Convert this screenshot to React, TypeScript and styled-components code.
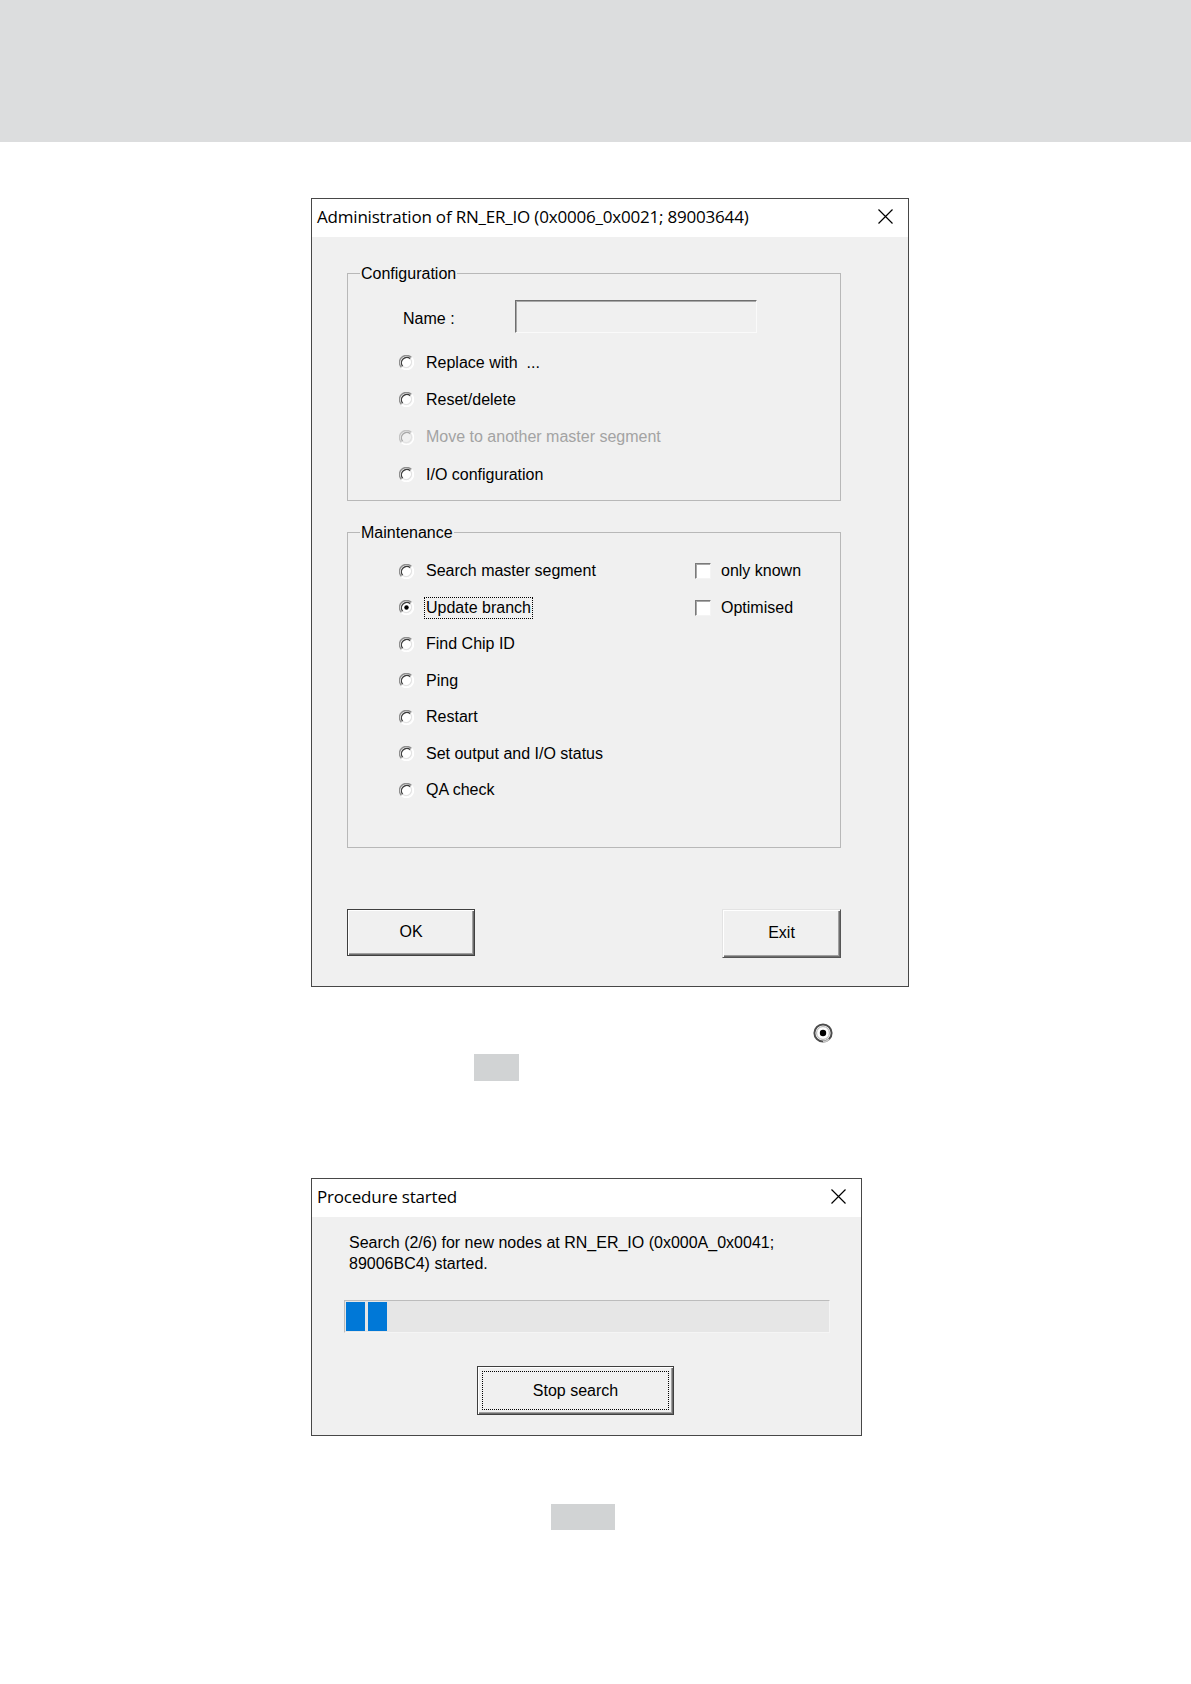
import React from 'react';
import styled, { createGlobalStyle } from 'styled-components';

const GlobalStyle = createGlobalStyle`
  body {
    margin: 0;
    background: #fff;
    font-family: 'Liberation Sans', Arial, sans-serif;
    color: #000;
  }
`;

const Page = styled.div`
  width: 1191px;
  min-height: 1684px;
  display: flex;
  flex-direction: column;
  align-items: flex-start;
`;

const Band = styled.div`
  align-self: stretch;
  height: 142px;
  background: #dcddde;
  flex-shrink: 0;
`;

const Window = styled.div<{ $top: number; $width: number; $height: number }>`
  box-sizing: border-box;
  margin: ${(p) => p.$top}px 0 0 311px;
  width: ${(p) => p.$width}px;
  height: ${(p) => p.$height}px;
  border: 1px solid #474747;
  background: #f0f0f0;
  display: flex;
  flex-direction: column;
  flex-shrink: 0;
`;

const TitleBar = styled.div`
  box-sizing: border-box;
  height: 38px;
  flex-shrink: 0;
  background: #fff;
  display: flex;
  align-items: center;
  justify-content: space-between;
  padding: 0 15px 3px 5px;
`;

const Title = styled.span`
  font-family: 'Open Sans', 'Noto Sans', sans-serif;
  font-size: 17px;
  letter-spacing: -0.2px;
  color: #000;
`;

const AdminBody = styled.div`
  display: flex;
  flex-direction: column;
  padding: 26px 67px 0 35px;
`;

const GroupBox = styled.fieldset<{ $gap?: number }>`
  margin: ${(p) => p.$gap || 0}px 0 0;
  padding: 0;
  min-width: 0;
  border: 1px solid #b8b8b8;
`;

const Legend = styled.legend`
  margin-left: 12px;
  padding: 2px 1px 0;
  font-size: 16px;
  line-height: 18px;
`;

const GroupContent = styled.div<{ $pt: number; $pb: number }>`
  display: flex;
  flex-direction: column;
  padding: ${(p) => p.$pt}px 0 ${(p) => p.$pb}px 51px;
`;

const NameRow = styled.div`
  height: 36px;
  margin: 0 0 10px 4px;
  display: flex;
  align-items: center;
`;

const NameLabel = styled.span`
  width: 112px;
  margin-top: 5px;
  font-size: 16px;
`;

const TextBox = styled.div`
  box-sizing: border-box;
  width: 242px;
  height: 33px;
  background: #f0f0f0;
  border-style: solid;
  border-width: 1px;
  border-color: #6e6e6e #fafafa #fafafa #6e6e6e;
  box-shadow: inset 1px 1px 0 #a8a8a8;
`;

const Columns = styled.div`
  display: flex;
`;

const Column = styled.div<{ $width?: number }>`
  display: flex;
  flex-direction: column;
  width: ${(p) => (p.$width ? `${p.$width}px` : 'auto')};
`;

const OptionRow = styled.div<{ $h: number; $gap?: number }>`
  height: ${(p) => p.$h}px;
  display: flex;
  align-items: center;
  gap: ${(p) => p.$gap ?? 10}px;
`;

const OptionLabel = styled.span<{ $disabled?: boolean; $focused?: boolean }>`
  font-size: 16px;
  line-height: 20px;
  padding: 0 1px;
  border: 1px dotted ${(p) => (p.$focused ? '#000' : 'transparent')};
  color: ${(p) => (p.$disabled ? '#a3a3a3' : '#000')};
  white-space: nowrap;
`;

const CheckBox = styled.span`
  box-sizing: border-box;
  width: 16px;
  height: 16px;
  background: #fff;
  border-style: solid;
  border-width: 1px;
  border-color: #7a7a7a #f4f4f4 #f4f4f4 #7a7a7a;
  box-shadow: inset 1px 1px 0 #a8a8a8;
`;

const ButtonRow = styled.div`
  margin-top: 61px;
  display: flex;
  justify-content: space-between;
  align-items: flex-start;
`;

const Button = styled.button<{ $w: number; $h: number; $isDefault?: boolean }>`
  box-sizing: border-box;
  width: ${(p) => p.$w}px;
  height: ${(p) => p.$h}px;
  padding: 4px;
  display: flex;
  align-items: stretch;
  font-family: 'Liberation Sans', Arial, sans-serif;
  font-size: 16px;
  color: #000;
  background: #f0f0f0;
  border-style: solid;
  border-width: 1px;
  border-color: ${(p) => (p.$isDefault ? '#3f3f3f' : '#e3e3e3 #555 #555 #e3e3e3')};
  box-shadow: inset 1px 1px 0 #fff, inset -1px -1px 0 #6d6d6d, inset -2px -2px 0 #a0a0a0;
`;

const ButtonFace = styled.span<{ $focused?: boolean }>`
  flex: 1;
  display: flex;
  align-items: center;
  justify-content: center;
  border: 1px dotted ${(p) => (p.$focused ? '#000' : 'transparent')};
`;

const RadioMark = styled.svg`
  margin: 36px 0 0 813px;
  flex-shrink: 0;
`;

const GraySwatch = styled.div<{ $top: number; $left: number; $w: number; $h: number }>`
  margin: ${(p) => p.$top}px 0 0 ${(p) => p.$left}px;
  width: ${(p) => p.$w}px;
  height: ${(p) => p.$h}px;
  background: #d1d3d4;
  flex-shrink: 0;
`;

const ProgressBody = styled.div`
  display: flex;
  flex-direction: column;
  align-items: flex-start;
  padding: 15px 31px 0 32px;
`;

const Message = styled.p`
  margin: 0 0 0 5px;
  font-size: 16px;
  line-height: 21px;
`;

const ProgressTrack = styled.div`
  box-sizing: border-box;
  margin-top: 26px;
  width: 486px;
  height: 33px;
  padding: 1px;
  display: flex;
  gap: 3px;
  background: #e6e6e6;
  border: 1px solid;
  border-color: #bcbcbc #f5f5f5 #f5f5f5 #bcbcbc;
`;

const ProgressBlock = styled.div`
  width: 19px;
  background: #0078d7;
`;

const StopRow = styled.div`
  margin: 33px 0 0 133px;
`;

const CloseIcon = () => (
  <svg width="15" height="15" viewBox="0 0 15 15">
    <path d="M0.5 0.5 L14.5 14.5 M14.5 0.5 L0.5 14.5" stroke="#000" strokeWidth="1.2" fill="none" />
  </svg>
);

// classic sunken radio: dark arcs top-left, light arcs bottom-right
const Radio = ({ checked, disabled }: { checked?: boolean; disabled?: boolean }) => (
  <svg width="15" height="15" viewBox="0 0 15 15" style={{ flexShrink: 0 }}>
    <circle cx="7.5" cy="7.5" r="6.5" fill={disabled ? '#f0f0f0' : '#fff'} />
    <path d="M12.5 2.5 A7 7 0 0 0 2.5 12.5" stroke={disabled ? '#c4c4c4' : '#8e8e8e'} strokeWidth="1.4" fill="none" />
    <path d="M11.3 3.7 A5.4 5.4 0 0 0 3.7 11.3" stroke={disabled ? '#a8a8a8' : '#3c3c3c'} strokeWidth="1.3" fill="none" />
    <path d="M2.5 12.5 A7 7 0 0 0 12.5 2.5" stroke="#fff" strokeWidth="1.4" fill="none" />
    <path d="M3.7 11.3 A5.4 5.4 0 0 0 11.3 3.7" stroke="#e3e3e3" strokeWidth="1.3" fill="none" />
    {checked && <circle cx="7.5" cy="7.5" r="2.2" fill="#000" />}
  </svg>
);

type Option = { label: string; checked?: boolean; disabled?: boolean; focused?: boolean };

const configOptions: Option[] = [
  { label: 'Replace with  ...' },
  { label: 'Reset/delete' },
  { label: 'Move to another master segment', disabled: true },
  { label: 'I/O configuration' },
];

const maintenanceOptions: Option[] = [
  { label: 'Search master segment' },
  { label: 'Update branch', checked: true, focused: true },
  { label: 'Find Chip ID' },
  { label: 'Ping' },
  { label: 'Restart' },
  { label: 'Set output and I/O status' },
  { label: 'QA check' },
];

const RadioOption = ({ option, h }: { option: Option; h: number }) => (
  <OptionRow $h={h}>
    <Radio checked={option.checked} disabled={option.disabled} />
    <OptionLabel $disabled={option.disabled} $focused={option.focused}>
      {option.label.replace(/ {2}/g, '\u00a0 ')}
    </OptionLabel>
  </OptionRow>
);

const App = () => {
  const progress = 2;
  return (
    <Page>
      <GlobalStyle />
      <Band />

      <Window $top={56} $width={598} $height={789}>
        <TitleBar>
          <Title>Administration of RN_ER_IO (0x0006_0x0021; 89003644)</Title>
          <CloseIcon />
        </TitleBar>
        <AdminBody>
          <GroupBox>
            <Legend>Configuration</Legend>
            <GroupContent $pt={15} $pb={7}>
              <NameRow>
                <NameLabel>Name :</NameLabel>
                <TextBox />
              </NameRow>
              {configOptions.map((o) => (
                <RadioOption key={o.label} option={o} h={37.3} />
              ))}
            </GroupContent>
          </GroupBox>

          <GroupBox $gap={21}>
            <Legend>Maintenance</Legend>
            <GroupContent $pt={11} $pb={38}>
              <Columns>
                <Column $width={296}>
                  {maintenanceOptions.map((o) => (
                    <RadioOption key={o.label} option={o} h={36.5} />
                  ))}
                </Column>
                <Column>
                  {['only known', 'Optimised'].map((l) => (
                    <OptionRow key={l} $h={36.5} $gap={8}>
                      <CheckBox />
                      <OptionLabel>{l}</OptionLabel>
                    </OptionRow>
                  ))}
                </Column>
              </Columns>
            </GroupContent>
          </GroupBox>

          <ButtonRow>
            <Button $w={128} $h={47} $isDefault>
              <ButtonFace>OK</ButtonFace>
            </Button>
            <Button $w={119} $h={49}>
              <ButtonFace>Exit</ButtonFace>
            </Button>
          </ButtonRow>
        </AdminBody>
      </Window>

      <RadioMark width="20" height="20" viewBox="0 0 20 20">
        <circle cx="10" cy="10" r="8.6" fill="#fff" stroke="#4d4d4d" strokeWidth="2" />
        <path d="M16.1 16.1 A8.6 8.6 0 0 1 10 18.6" stroke="#c8c8c8" strokeWidth="2" fill="none" />
        <circle cx="10" cy="10" r="6.4" fill="none" stroke="#9a9a9a" strokeWidth="0.8" />
        <circle cx="10" cy="10" r="3.2" fill="#000" />
      </RadioMark>
      <GraySwatch $top={11} $left={474} $w={45} $h={27} />

      <Window $top={97} $width={551} $height={258}>
        <TitleBar>
          <Title>Procedure started</Title>
          <CloseIcon />
        </TitleBar>
        <ProgressBody>
          <Message>
            Search (2/6) for new nodes at RN_ER_IO (0x000A_0x0041;
            <br />
            89006BC4) started.
          </Message>
          <ProgressTrack>
            {Array.from({ length: progress }).map((_, i) => (
              <ProgressBlock key={i} />
            ))}
          </ProgressTrack>
          <StopRow>
            <Button $w={197} $h={49} $isDefault>
              <ButtonFace $focused>Stop search</ButtonFace>
            </Button>
          </StopRow>
        </ProgressBody>
      </Window>

      <GraySwatch $top={68} $left={551} $w={64} $h={26} />
    </Page>
  );
};

export default App;
